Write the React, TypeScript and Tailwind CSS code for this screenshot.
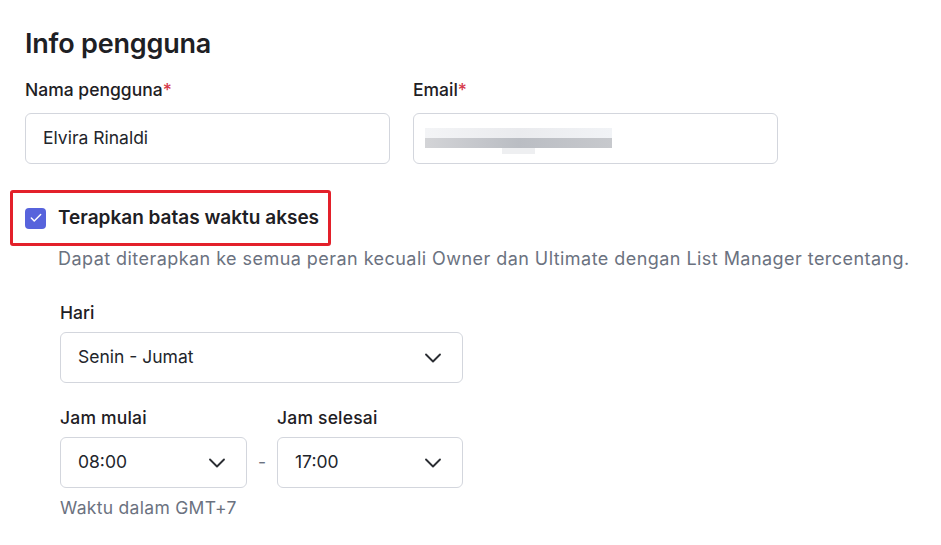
import { ChevronDown, Check } from 'lucide-react'

function Select({ value, className = '' }: { value: string; className?: string }) {
  return (
    <div
      className={`flex h-[51px] items-center justify-between rounded-md border border-[#d3d6dd] bg-white pl-[17px] pr-[15px] text-[17.5px] text-[#22252b] ${className}`}
    >
      <span>{value}</span>
      <ChevronDown className="h-[28px] w-[28px] text-[#2b2e33]" strokeWidth={1.6} />
    </div>
  )
}

export default function App() {
  return (
    <div
      className="min-h-[545px] w-[941px] bg-white pl-[25px] pt-[26px] text-[#1e2024]"
      style={{ fontFamily: 'Inter, "Noto Sans", sans-serif' }}
    >
      <h1 className="text-[27px] leading-[36px] font-semibold tracking-[-0.2px]">Info pengguna</h1>

      <div className="mt-[16px] flex gap-[23px]">
        <div className="w-[365px]">
          <label className="block text-[17.5px] leading-[24px] font-medium">
            Nama pengguna<span className="text-[#d63a4a]">*</span>
          </label>
          <div className="mt-[11px] flex h-[51px] items-center rounded-md border border-[#d3d6dd] px-[17px] text-[17.5px] text-[#22252b]">
            Elvira Rinaldi
          </div>
        </div>
        <div className="w-[365px]">
          <label className="block text-[17.5px] leading-[24px] font-medium">
            Email<span className="text-[#d63a4a]">*</span>
          </label>
          <div className="mt-[11px] flex h-[51px] items-center rounded-md border border-[#d3d6dd] px-[11px]">
            {/* blurred address */}
            <div className="mt-[4px] flex flex-col">
              <div className="h-[10px] w-[187px] bg-gradient-to-r from-[#f3f4f6] via-[#eaebee] to-[#f1f3f6]" />
              <div className="h-[10px] w-[187px] bg-gradient-to-r from-[#d3d4d7] via-[#babdc3] to-[#c7c9cd]" />
              <div className="ml-[77px] h-[6px] w-[33px] bg-[#eeeff1]" />
            </div>
          </div>
        </div>
      </div>

      <div className="ml-[-15px] mt-[26px] inline-flex items-center gap-[12px] rounded-[3px] border-[3px] border-[#e3202a] py-[12px] pl-[12px] pr-[9px]">
        <span className="flex h-[21px] w-[21px] items-center justify-center rounded-[4px] bg-[#5763dc]">
          <Check className="h-[14px] w-[14px] text-white" strokeWidth={2.5} />
        </span>
        <span className="text-[19px] leading-[26px] font-semibold text-[#1e2024]">Terapkan batas waktu akses</span>
      </div>

      <p className="ml-[33px] mt-[1px] text-[18px] leading-[24px] tracking-[0.45px] text-[#6b7280]">
        Dapat diterapkan ke semua peran kecuali Owner dan Ultimate dengan List Manager tercentang.
      </p>

      <div className="ml-[35px] mt-[30px] w-[403px]">
        <label className="block text-[17.5px] leading-[24px] font-medium">Hari</label>
        <Select value="Senin - Jumat" className="mt-[7px]" />

        <div className="mt-[23px] flex items-end">
          <div className="w-[187px]">
            <label className="block text-[17.5px] leading-[24px] font-medium tracking-[0.2px]">Jam mulai</label>
            <Select value="08:00" className="mt-[7px]" />
          </div>
          <div className="flex h-[51px] w-[30px] items-center justify-center text-[17.5px] text-[#6b7280]">-</div>
          <div className="w-[186px]">
            <label className="block text-[17.5px] leading-[24px] font-medium tracking-[0.2px]">Jam selesai</label>
            <Select value="17:00" className="mt-[7px]" />
          </div>
        </div>

        <p className="mt-[8px] text-[17.5px] leading-[24px] tracking-[0.3px] text-[#6b7280]">Waktu dalam GMT+7</p>
      </div>
    </div>
  )
}
